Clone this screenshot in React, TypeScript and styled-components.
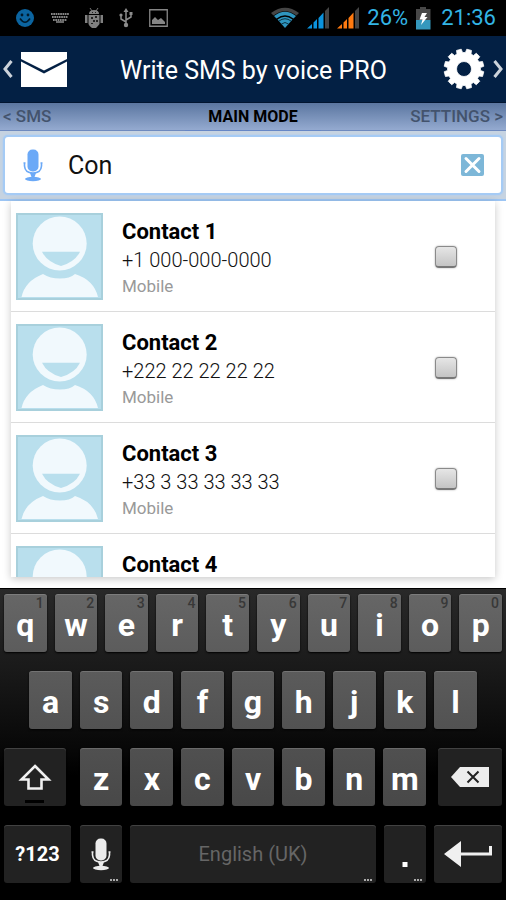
import React from "react";
import styled, { createGlobalStyle } from "styled-components";

const GlobalStyle = createGlobalStyle`
  *, *::before, *::after { box-sizing: border-box; }
  body { margin: 0; background: #fff; font-family: Roboto, "Liberation Sans", sans-serif; }
  button, input { font-family: inherit; }
  svg { display: block; flex: none; }
`;

const Screen = styled.div`
  display: flex;
  flex-direction: column;
  height: 100vh;
  overflow: hidden;
`;

const StatusBar = styled.div`
  display: flex;
  align-items: center;
  justify-content: space-between;
  flex: none;
  height: 36px;
  padding: 0 9px 0 15px;
  background: #000;
  color: #33b5e5;
  font-size: 22px;
  line-height: 36px;
`;

const StatusGroup = styled.div<{ $gap: number }>`
  display: flex;
  align-items: center;
  gap: ${(p) => p.$gap}px;
`;

const Clock = styled.span`
  padding: 0 1px 0 2px;
`;

const Header = styled.header`
  display: flex;
  align-items: center;
  justify-content: space-between;
  flex: none;
  height: 67px;
  padding: 0 3px;
  background: #032044;
  border-bottom: 1px solid #021530;
`;

const Title = styled.h1`
  margin: 0;
  padding: 3px 3px 0 0;
  color: #fff;
  font-size: 25px;
  font-weight: 400;
  line-height: 32px;
`;

const HeaderButton = styled.button`
  display: flex;
  align-items: center;
  gap: 8px;
  padding: 0;
  border: 0;
  background: none;
`;

const Tabs = styled.nav`
  display: grid;
  grid-template-columns: 1fr 27% 1fr;
  flex: none;
  height: 28px;
  background: linear-gradient(#5b76a0, #94aad0);
  border-bottom: 1px solid #6e8abf;
`;

const Tab = styled.a<{ $active?: boolean; $align: string }>`
  padding: 0 3px;
  color: ${(p) => (p.$active ? "#000" : "#43536d")};
  border-bottom: ${(p) => (p.$active ? "4px solid #6586c6" : "0")};
  font-size: ${(p) => (p.$active ? 16 : 17)}px;
  font-weight: ${(p) => (p.$active ? 700 : 500)};
  line-height: 27px;
  text-align: ${(p) => p.$align};
  text-decoration: none;
  white-space: nowrap;
`;

const SearchBand = styled.div`
  flex: none;
  padding: 4px 3px;
  background: #c6d3e1;
  border-bottom: 2px solid #9cc5f4;
`;

const SearchBox = styled.div`
  display: flex;
  align-items: center;
  height: 60px;
  padding: 0 17px 0 18px;
  background: #fff;
  border: 2px solid #a5cbf5;
  border-radius: 5px;
  box-shadow: 0 0 2px #a5cbf5;
`;

const SearchInput = styled.input`
  flex: 1;
  min-width: 0;
  margin-left: 25px;
  padding: 2px 0 0;
  border: 0;
  outline: 0;
  background: none;
  color: #111;
  font-size: 25px;
  line-height: 32px;
`;

const PlainButton = styled.button`
  padding: 0;
  border: 0;
  background: none;
`;

const ContactList = styled.ul`
  flex: 1;
  min-height: 0;
  margin: 0 11px 11px;
  padding: 0;
  overflow: hidden;
  list-style: none;
  background: #fff;
  box-shadow: 0 2px 8px rgba(0, 0, 0, 0.22);
`;

const ContactRow = styled.li`
  height: 111px;
  border-bottom: 1px solid #dcdcdc;
`;

const ContactLabel = styled.label`
  display: flex;
  height: 110px;
  padding: 12px 38px 11px 5px;
`;

const ContactText = styled.span`
  display: flex;
  flex: 1;
  flex-direction: column;
  margin-left: 19px;
  padding-top: 5px;
`;

const Name = styled.span`
  color: #000;
  font-size: 22px;
  font-weight: 700;
  line-height: 28px;
`;

const Phone = styled.span`
  color: #111;
  font-size: 20px;
  font-weight: 300;
  line-height: 28px;
`;

const Kind = styled.span`
  color: #999;
  font-size: 17px;
  line-height: 24px;
`;

const Check = styled.input`
  appearance: none;
  align-self: center;
  width: 22px;
  height: 22px;
  margin: 0;
  border: 1px solid #8a8a8a;
  border-bottom: 2px solid #777;
  border-radius: 4px;
  background: linear-gradient(#e6e6e6, #c4c4c4);
  box-shadow: 0 0 2px rgba(0, 0, 0, 0.35);
`;

const Keyboard = styled.div`
  display: flex;
  flex-direction: column;
  flex: none;
  gap: 19px;
  padding: 5px 0 17px;
  border-top: 1px solid #000;
  background: linear-gradient(#292929, #1a1a1a 25%, #070707 52%, #000 60%);
`;

const KeyRow = styled.div<{ $columns: string; $inset?: string }>`
  display: grid;
  grid-template-columns: ${(p) => p.$columns};
  padding: 0 ${(p) => p.$inset ?? "0"};
`;

const Key = styled.button<{ $tone: string; $left?: number; $right?: number }>`
  position: relative;
  display: flex;
  align-items: center;
  justify-content: center;
  min-width: 0;
  height: 58px;
  margin: 0 ${(p) => p.$right ?? 4}px 0 ${(p) => p.$left ?? 4}px;
  padding: 3px 0 0;
  border: 0;
  border-radius: 3px;
  background: ${(p) => p.$tone};
  box-shadow: inset 0 1px 0 rgba(255, 255, 255, 0.15), 0 1px 2px #000;
  color: #fff;
  font-size: 32px;
  font-weight: 700;
  line-height: 36px;
  white-space: nowrap;
`;

const FunctionKey = styled(Key).attrs({ $tone: "#222" })`
  padding: 0;
  font-size: 20px;
`;

const SpaceKey = styled(FunctionKey)`
  color: #666;
  font-weight: 400;
`;

const Hint = styled.span`
  position: absolute;
  top: 2px;
  right: 3px;
  color: #383838;
  font-size: 14px;
  font-weight: 500;
  line-height: 14px;
`;

const More = styled.span`
  position: absolute;
  right: 4px;
  bottom: 2px;
  width: 8px;
  border-bottom: 2px dotted #aaa;
`;

const ShiftMark = styled.span`
  position: absolute;
  bottom: 3px;
  left: 21px;
  width: 19px;
  height: 3px;
  background: #000;
`;

const SmileIcon = () => (
  <svg width="20" height="20" viewBox="0 0 20 20" aria-hidden="true">
    <circle cx="10" cy="10" r="9" fill="#0b64a0" />
    <circle cx="7" cy="7" r="1.4" fill="#001a2c" />
    <circle cx="13" cy="7" r="1.4" fill="#001a2c" />
    <path d="M5 10.5Q10 18 15 10.5" fill="none" stroke="#001a2c" strokeWidth="1.6" />
  </svg>
);

const KeyboardIcon = () => (
  <svg width="18" height="10" viewBox="0 0 18 10" aria-hidden="true">
    <path d="M0 1H18M1 4H17M2 7H16" stroke="#858585" strokeWidth="1.8" strokeDasharray="1.7 0.6" />
    <path d="M5 9H13" stroke="#858585" strokeWidth="1.6" />
  </svg>
);

const AndroidIcon = () => (
  <svg width="18" height="21" viewBox="0 0 18 21" aria-hidden="true">
    <path d="M5 0l2 3M13 0l-2 3" stroke="#777" />
    <path d="M4 6Q4 2 9 2Q14 2 14 6ZM3.5 7H14.5V16Q13 18 11 20H7Q4 18 3.5 16ZM0 7H2.5V15H0ZM15.5 7H18V15H15.5Z" fill="#808080" />
    <path d="M6 9h2v2H6zM10 8h2v2h-2zM8 12h2v2H8zM11 12h2v2h-2zM6 15h2v1H6zM7 4h1v1H7zM10 4h1v1h-1z" fill="#222" />
  </svg>
);

const UsbIcon = () => (
  <svg width="14" height="20" viewBox="0 0 14 20" aria-hidden="true">
    <path d="M7 3V17M7 14L2 11V7M7 12L12 9V6" fill="none" stroke="#8c8c8c" strokeWidth="1.5" />
    <path d="M7 0L9.5 4H4.500Z" fill="#8c8c8c" />
    <circle cx="7" cy="17" r="2.200" fill="#8c8c8c" />
    <circle cx="2" cy="7" r="1.600" fill="#8c8c8c" />
    <path d="M10.500 4h3v3h-3z" fill="#8c8c8c" />
  </svg>
);

const PictureIcon = () => (
  <svg width="19" height="18" viewBox="0 0 19 18" aria-hidden="true">
    <path d="M.75.75H18.250V17.250H.75Z" fill="none" stroke="#858585" strokeWidth="1.3" />
    <path d="M3 15V11L6 8L9 11L12 9L16 13V15Z" fill="#858585" />
  </svg>
);

const WifiIcon = () => (
  <svg width="28" height="22" viewBox="1 0 28 22" aria-hidden="true">
    <path d="M1 6Q15 -4.500 29 6L26.500 8.500Q15 0 3.500 8.500Z" fill="#454545" />
    <path d="M4 9Q15 .5 26 9L23.500 11.500Q15 5 6.500 11.500Z" fill="#2f95bf" />
    <path d="M7.500 12.500Q15 7 22.500 12.500L15 21Z" fill="#2f95bf" />
    <path d="M9 14Q15 9.500 21 14M11.500 17Q15 14 18.500 17" fill="none" stroke="#0b3345" />
  </svg>
);

const SignalIcon = ({ color }: { color: string }) => (
  <svg width="22" height="22" viewBox="0 0 22 22" aria-hidden="true">
    <path d="M0 21.500L5 17V21.500ZM6.500 15.500L10 12V21.500H6.500ZM11.500 11L16.500 5.500V21.500H11.500Z" fill={color} />
    <path d="M18 4L22 0V21.500H18Z" fill="#444" />
  </svg>
);

const BatteryIcon = () => (
  <svg width="15" height="23" viewBox="0 0 15 23" aria-hidden="true">
    <path d="M4 0H10V2H14.500V13H0V2H4Z" fill="#484848" />
    <path d="M0 13H14.500V22.500H0Z" fill="#3598bd" />
    <path d="M6 6H11L8.500 10H11.500L5 18L6.500 12.500H3.500Z" fill="#fff" />
  </svg>
);

const Chevron = ({ right = false }: { right?: boolean }) => (
  <svg width="10" height="18" viewBox="0 0 10 18" aria-hidden="true">
    <path d={right ? "M1.500 1L8 9L1.500 17" : "M8.500 1L2 9L8.500 17"} fill="none" stroke="#ccd2da" strokeWidth="3" />
  </svg>
);

const EnvelopeIcon = () => (
  <svg width="46" height="35" viewBox="0 0 46 35" aria-hidden="true">
    <path d="M0 0H46V7L23 18.500L0 7ZM0 9.500L23 21.500L46 9.500V35H0Z" fill="#fff" />
  </svg>
);

const gearOutline = Array.from({ length: 12 }, (_, i) => {
  const point = (radius: number, degrees: number) => {
    const a = ((i * 30 + 15 + degrees) * Math.PI) / 180;
    return `${(21 + radius * Math.cos(a)).toFixed(2)} ${(21 + radius * Math.sin(a)).toFixed(2)}`;
  };
  return `${i ? "L" : "M"}${point(16.5, -10)}L${point(20, -7)}L${point(20, 7)}L${point(16.5, 10)}`;
}).join("");

const GearIcon = () => (
  <svg width="42" height="42" viewBox="0 0 42 42" aria-hidden="true">
    <path d={`${gearOutline}ZM28.500 21A7.500 7.500 0 1 0 13.500 21A7.500 7.500 0 1 0 28.500 21Z`} fill="#fff" fillRule="evenodd" stroke="#fff" strokeWidth="0.8" strokeLinejoin="round" />
  </svg>
);

const MicIcon = ({ color }: { color: string }) => (
  <svg width="20" height="33" viewBox="0 0 20 33" aria-hidden="true">
    <rect x="4.500" y="0.500" width="11" height="22" rx="5" fill={color} />
    <path d="M.5 14H2.500M17.500 14H19.500M1.500 14V17Q2 24 10 24Q18 24 18.500 17V14" fill="none" stroke={color} strokeWidth="1.600" />
    <path d="M7 24H13L11.500 28H8.500Z" fill={color} />
    <ellipse cx="10" cy="30" rx="8" ry="2.200" fill={color} />
  </svg>
);

const ClearIcon = () => (
  <svg width="23" height="22" viewBox="0 0 23 22" aria-hidden="true">
    <rect width="23" height="22" rx="2" fill="#7db7d8" />
    <path d="M5 4.500L18 17.500M18 4.500L5 17.500" stroke="#fff" strokeWidth="3" strokeLinecap="round" />
  </svg>
);

const Avatar = () => (
  <svg width="87" height="87" viewBox="0 0 87 87" aria-hidden="true">
    <rect x="1" y="1" width="85" height="85" fill="#b9dfed" stroke="#a8d0dc" strokeWidth="2" />
    <circle cx="43.700" cy="30.500" r="27" fill="#f1f9fd" />
    <path d="M26 38.700H64Q59 49 45 53Q31 49 26 38.700Z" fill="#b9dfed" />
    <path d="M5.500 84Q9 68 27 61Q34 65.500 44 65.500Q54 65.500 59 61Q78 67 82 84Z" fill="#f1f9fd" />
  </svg>
);

const ShiftIcon = () => (
  <svg width="34" height="26" viewBox="0 0 34 26" aria-hidden="true">
    <path d="M17 2L30.500 15.500H23.500V24.500H10.500V15.500H3.500Z" fill="none" stroke="#f0f0f0" strokeWidth="2.600" />
  </svg>
);

const BackspaceIcon = () => (
  <svg width="38" height="20" viewBox="0 0 38 20" aria-hidden="true">
    <path d="M0 10L9 0H38V20H9Z" fill="#ededed" />
    <path d="M16.500 4.500L27.500 15.500M27.500 4.500L16.500 15.500" stroke="#222" strokeWidth="2" />
  </svg>
);

const EnterIcon = () => (
  <svg width="48" height="26" viewBox="0 0 48 26" aria-hidden="true">
    <path d="M0 13L17 0V11.500H45V5H48V14.500H17V26Z" fill="#f0f0f0" />
  </svg>
);

const PeriodIcon = () => (
  <svg width="6" height="26" viewBox="0 0 6 26" aria-hidden="true">
    <path d="M.5 21H5.500V26H.5Z" fill="#fff" />
  </svg>
);

const contacts = [
  { name: "Contact 1", phone: "+1 000-000-0000", kind: "Mobile" },
  { name: "Contact 2", phone: "+222 22 22 22 22", kind: "Mobile" },
  { name: "Contact 3", phone: "+33 3 33 33 33 33", kind: "Mobile" },
  { name: "Contact 4" },
];

export default function App() {
  return (
    <Screen>
      <GlobalStyle />
      <StatusBar>
        <StatusGroup $gap={16}>
          <SmileIcon />
          <KeyboardIcon />
          <AndroidIcon />
          <UsbIcon />
          <PictureIcon />
        </StatusGroup>
        <StatusGroup $gap={8}>
          <WifiIcon />
          <SignalIcon color="#0b93dd" />
          <SignalIcon color="#ff7a10" />
          <span>26%</span>
          <BatteryIcon />
          <Clock>21:36</Clock>
        </StatusGroup>
      </StatusBar>
      <Header>
        <HeaderButton type="button" aria-label="Messages">
          <Chevron />
          <EnvelopeIcon />
        </HeaderButton>
        <Title>Write SMS by voice PRO</Title>
        <HeaderButton type="button" aria-label="Settings">
          <GearIcon />
          <Chevron right />
        </HeaderButton>
      </Header>
      <Tabs>
        <Tab href="#sms" $align="left">&lt; SMS</Tab>
        <Tab href="#main" $align="center" $active>MAIN MODE</Tab>
        <Tab href="#settings" $align="right">SETTINGS &gt;</Tab>
      </Tabs>
      <SearchBand>
        <SearchBox>
          <PlainButton type="button" aria-label="Speak a name">
            <MicIcon color="#6ba9f7" />
          </PlainButton>
          <SearchInput type="text" aria-label="Recipient" defaultValue="Con" />
          <PlainButton type="button" aria-label="Clear">
            <ClearIcon />
          </PlainButton>
        </SearchBox>
      </SearchBand>
      <ContactList>
        {contacts.map((c) => (
          <ContactRow key={c.name}>
            <ContactLabel>
              <Avatar />
              <ContactText>
                <Name>{c.name}</Name>
                {c.phone && <Phone>{c.phone}</Phone>}
                {c.kind && <Kind>{c.kind}</Kind>}
              </ContactText>
              <Check type="checkbox" />
            </ContactLabel>
          </ContactRow>
        ))}
      </ContactList>
      <Keyboard>
        <KeyRow $columns="repeat(10, 1fr)">
          {"qwertyuiop".split("").map((k, i) => (
            <Key key={k} type="button" $tone="linear-gradient(#666, #5c5c5c)">
              {k}
              <Hint>{(i + 1) % 10}</Hint>
            </Key>
          ))}
        </KeyRow>
        <KeyRow $columns="repeat(9, 1fr)" $inset="5%">
          {"asdfghjkl".split("").map((k) => (
            <Key key={k} type="button" $tone="linear-gradient(#5b5b5b, #525252)">{k}</Key>
          ))}
        </KeyRow>
        <KeyRow $columns="3fr repeat(7, 2fr) 3fr">
          <FunctionKey type="button" aria-label="Shift" $right={10}>
            <ShiftIcon />
            <ShiftMark />
          </FunctionKey>
          {"zxcvbnm".split("").map((k) => (
            <Key key={k} type="button" $tone="linear-gradient(#505050, #484848)">{k}</Key>
          ))}
          <FunctionKey type="button" aria-label="Backspace" $left={8}>
            <BackspaceIcon />
          </FunctionKey>
        </KeyRow>
        <KeyRow $columns="3fr 2fr 10fr 2fr 3fr">
          <FunctionKey type="button" $right={5}>?123</FunctionKey>
          <FunctionKey type="button" aria-label="Voice input">
            <MicIcon color="#ececec" />
            <More />
          </FunctionKey>
          <SpaceKey type="button">
            English (UK)
            <More />
          </SpaceKey>
          <FunctionKey type="button" aria-label="Period">
            <PeriodIcon />
            <More />
          </FunctionKey>
          <FunctionKey type="button" aria-label="Enter">
            <EnterIcon />
          </FunctionKey>
        </KeyRow>
      </Keyboard>
    </Screen>
  );
}
